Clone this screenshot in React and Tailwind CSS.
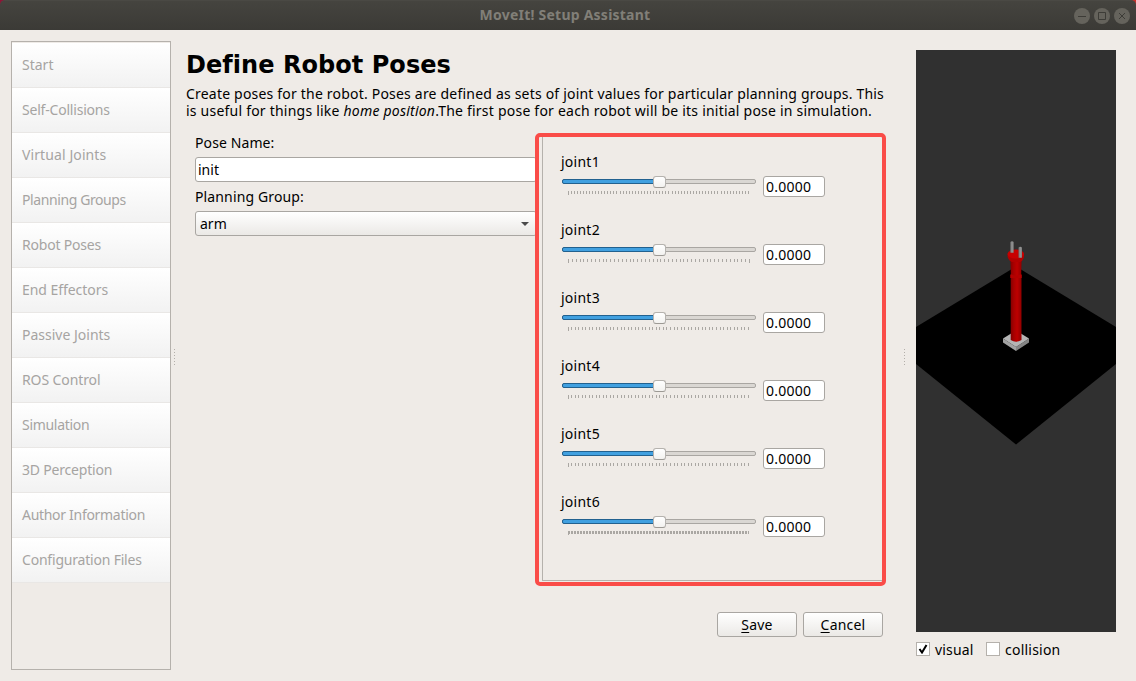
import React from "react";

const steps = [
  ["Start", "tracking-[0px]"],
  ["Self-Collisions", "tracking-[-0.2px]"],
  ["Virtual Joints", "tracking-[0.1px]"],
  ["Planning Groups", "tracking-[-0.4px]"],
  ["Robot Poses", "tracking-[-0.2px]"],
  ["End Effectors", "tracking-[-0.05px]"],
  ["Passive Joints", "tracking-[0px]"],
  ["ROS Control", "tracking-[-0.1px]"],
  ["Simulation", "tracking-[-0.3px]"],
  ["3D Perception", "tracking-[-0.2px]"],
  ["Author Information", "tracking-[-0.3px]"],
  ["Configuration Files", "tracking-[-0.2px]"],
];

const joints = [
  { name: "joint1", step: 3.06, shift: 0 },
  { name: "joint2", step: 3.851, shift: 0.45 },
  { name: "joint3", step: 3.535, shift: 0 },
  { name: "joint4", step: 3.535, shift: 0 },
  { name: "joint5", step: 3.535, shift: 0 },
  { name: "joint6", step: 1.5, shift: 0 },
];

function Ticks({ step, shift }) {
  const marks = [];
  for (let i = 0; i * step < 181.1; i++) marks.push(Math.floor(i * step + shift));
  return (
    <svg width="182" height="4" className="ml-[6px] mt-[7px] block" shapeRendering="crispEdges">
      {marks.map((x, i) => (
        <rect key={i} x={x} y="0" width="1" height={i === 0 || x === 181 ? 4 : 3} fill="#aaa7a3" />
      ))}
    </svg>
  );
}

function Joint({ name, step, shift }) {
  return (
    <div className="h-[68px]">
      <div className="h-[22px] text-[14px] leading-[22px] tracking-[0.25px]">{name}</div>
      <div className="flex pl-px">
        <div className="mt-[6px] w-[194px]">
          <div className="relative h-[5px] rounded-[2px] border border-[#a9a6a2] bg-[#dad7d3]">
            <div className="absolute -left-px -top-px h-[5px] w-[96px] rounded-l-[2px] border border-[#22618f] bg-[#41a0e0]" />
            <div className="absolute left-[90px] -top-[4px] h-[12px] w-[13px] rounded-[3px] border border-[#b5b2ae] border-b-[#9c9994] bg-linear-to-b from-white to-[#f3f2f0]" />
          </div>
          <Ticks step={step} shift={shift} />
        </div>
        <div className="ml-[7px] mt-[3px] h-[21px] w-[62px] rounded-[3px] border border-[#a9a6a2] bg-white pl-[2px] text-[14px] leading-[20px] tracking-[0.25px]">
          0.0000
        </div>
      </div>
    </div>
  );
}

function Grip() {
  return (
    <div className="flex w-px flex-col gap-[2px]">
      {[0, 1, 2, 3, 4, 5].map((i) => (
        <div key={i} className="size-px bg-[#b3afaa]" />
      ))}
    </div>
  );
}

function WindowButton({ children }) {
  return (
    <svg width="16" height="16" viewBox="0 0 16 16" fill="none">
      <circle cx="8" cy="8" r="8" fill="#65635c" />
      <g stroke="#3d3c37" strokeWidth="1">{children}</g>
    </svg>
  );
}

function Button({ first, rest }) {
  return (
    <button className="h-[25px] w-[80px] rounded-[3px] border border-[#a9a6a2] bg-linear-to-b from-white to-[#ebe9e6] text-center text-[14px] leading-[23px] tracking-[0.2px]">
      <span className="underline decoration-1 underline-offset-2">{first}</span>
      {rest}
    </button>
  );
}

function RobotView() {
  return (
    <svg width="200" height="582" viewBox="0 0 200 582" className="block bg-[#303030]">
      <defs>
        <linearGradient id="tube" x1="0" x2="1" y1="0" y2="0">
          <stop offset="0" stopColor="#850000" />
          <stop offset="0.3" stopColor="#a80000" />
          <stop offset="0.6" stopColor="#bd0000" />
          <stop offset="1" stopColor="#900000" />
        </linearGradient>
        <linearGradient id="finger" x1="0" x2="1" y1="0" y2="0">
          <stop offset="0" stopColor="#6c6c6c" />
          <stop offset="0.5" stopColor="#959595" />
          <stop offset="1" stopColor="#7c7c7c" />
        </linearGradient>
      </defs>
      <path d="M100 216.5L200 277V314L100 394.5L0 314V277Z" fill="#000" />
      <path d="M87 288.5L100 297V301L87 292.5Z" fill="#a2a2a2" />
      <path d="M113 288.5L100 297V301L113 292.5Z" fill="#858585" />
      <path d="M100 280.5L113 288.5L100 297L87 288.5Z" fill="#b5b5b5" />
      <path d="M94.7 225H105.5V290Q100 293.5 94.7 290Z" fill="url(#tube)" />
      <path d="M94.3 224.5Q100 221 105.7 224.5V228H94.3Z" fill="#b40000" />
      <path d="M94.3 208H105.700L105.200 224Q100 227.500 94.800 224Z" fill="url(#tube)" />
      <path d="M91.600 203.500V207Q93 211 96 212H104Q107 211 108 207V203.500Z" fill="#b20000" />
      <ellipse cx="99.800" cy="204" rx="8.200" ry="4.600" fill="#c80000" />
      <path d="M94.300 192Q96 190.500 97.700 192V202.700H94.300Z" fill="url(#finger)" />
      <path d="M102.500 197.500Q104.200 196 106 197.500V207.800H102.500Z" fill="url(#finger)" />
    </svg>
  );
}

export default function App() {
  return (
    <div className="flex h-[681px] w-[1136px] flex-col bg-[#efebe7] font-['Noto_Sans','Open_Sans',sans-serif] text-[14px] text-black">
      <header className="h-[30px] bg-linear-to-r from-[#8f1436] to-[#c9302a]">
        <div className="grid h-full grid-cols-[1fr_auto_1fr] items-center rounded-t-[5px] border-t border-[#4a4944] bg-linear-to-b from-[#45443f] to-[#3b3a36] pr-[6px]">
          <span />
          <span className="-mt-[2px] text-[14px] font-bold leading-[20px] tracking-[0.23px] text-[#817f78]">MoveIt! Setup Assistant</span>
          <div className="flex justify-end gap-[4px]">
            <WindowButton><path d="M4 8.500H12" /></WindowButton>
            <WindowButton><path d="M4.500 4.500H11.500V11.500H4.500Z" /></WindowButton>
            <WindowButton><path d="M5 5L11 11M11 5L5 11" /></WindowButton>
          </div>
        </div>
      </header>

      <div className="flex flex-1">
        <nav className="ml-[11px] mt-[11px] h-[629px] w-[160px] border border-[#b5b1ac] pt-px">
          {steps.map(([label, tracking]) => (
            <div
              key={label}
              className="h-[45px] border-b border-[#e9e7e5] bg-linear-to-b from-white to-[#f2f2f2] pl-[10px] leading-[43px] text-[#a6a4a2]"
            >
              <span className={tracking}>{label}</span>
            </div>
          ))}
        </nav>
        <div className="ml-[3px] mt-[319px]"><Grip /></div>

        <main className="ml-[11px] w-[698px] pt-[21px]">
          <h1 className="h-[28px] whitespace-nowrap font-['DejaVu_Sans',sans-serif] text-[24px] font-bold leading-[28px] tracking-[0.05px]">
            Define Robot Poses
          </h1>
          <div className="mt-[6px] whitespace-nowrap leading-[17px]">
            <p><span className="tracking-[0.2px]">Create poses for the robot. Poses are defined as sets of joint values for particular planning groups. This</span></p>
            <p><span className="tracking-[0.22px]">is useful for things like <i>home position</i>.The first pose for each robot will be its initial pose in simulation.</span></p>
          </div>

          <div className="mt-[14px] flex h-[453px]">
            <div className="w-[349px] shrink-0 pl-[9px]">
              <div className="leading-[20px] tracking-[0.1px]">Pose Name:</div>
              <div className="mt-[4px] h-[25px] w-[342px] rounded-[3px] border border-[#a9a6a2] bg-white pl-[2px] leading-[24px]">init</div>
              <div className="mt-[5px] leading-[20px] tracking-[0.13px]">Planning Group:</div>
              <div className="mt-[4px] flex h-[25px] w-[342px] items-center justify-between rounded-[3px] border border-[#a9a6a2] bg-linear-to-b from-white to-[#ebe9e6] pl-[4px] pr-[7px]">
                <span>arm</span>
                <svg width="8" height="4" className="block"><path d="M0 0H8L4 4Z" fill="#4b4b4b" /></svg>
              </div>
            </div>
            <section className="relative z-10 w-[351px] shrink-0 rounded-[5px] border-4 border-[#fa4c48] bg-[#efebe7]">
              <div className="ml-[3px] h-[444px] border-b border-l border-[#b5b1ac] pl-[18px] pt-[14px]">
                {joints.map((j) => <Joint key={j.name} {...j} />)}
              </div>
            </section>
          </div>

          <div className="mt-[26px] flex justify-end gap-[6px] pr-px">
            <Button first="S" rest="ave" />
            <Button first="C" rest="ancel" />
          </div>
        </main>

        <div className="ml-[20px] mt-[319px]"><Grip /></div>
        <aside className="ml-[11px] pt-[20px]">
          <RobotView />
          <div className="mt-[7px] flex h-[20px] items-center">
            <span className="flex size-[14px] items-center justify-center border border-[#b5b1ac] bg-white">
              <svg width="10" height="10" viewBox="0 0 10 10" fill="none">
                <path d="M1.500 5L4 8.500L8.500 1" stroke="#000" strokeWidth="2" />
              </svg>
            </span>
            <span className="ml-[5px] w-[51px] tracking-[0.15px]">visual</span>
            <span className="size-[14px] border border-[#b5b1ac] bg-white" />
            <span className="ml-[5px] tracking-[0.22px]">collision</span>
          </div>
        </aside>
      </div>
    </div>
  );
}
